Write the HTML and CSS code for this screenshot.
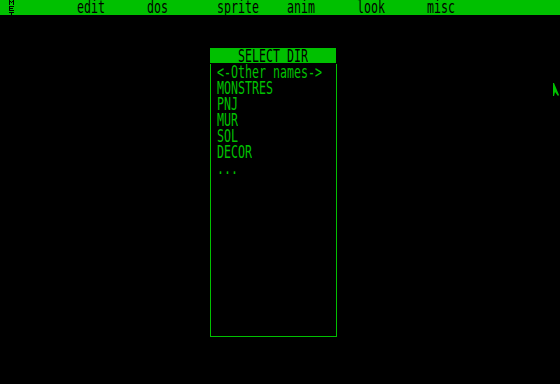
FILE: index.html
```html
<!DOCTYPE html>
<html>
<head>
<meta charset="utf-8">
<link rel="stylesheet" href="styles.css">
</head>
<body>
<div class="screen">
  <div class="menubar">
    <span class="logo"><svg width="5" height="15" viewBox="0 0 5 15"><path d="M0 0h1v1h1v1h1v-1h1v-1h1v5h-1v-3h-1v1h-1v-1h-1v3h-1z M0 6h5v1h-4v1h3v1h-3v1h4v1h-5z M0 12h5v1h-2v2h-1v-2h-2z" fill="#000"/></svg></span>
    <span class="item">edit</span>
    <span class="item">dos</span>
    <span class="item">sprite</span>
    <span class="item">anim</span>
    <span class="item">look</span>
    <span class="item">misc</span>
  </div>
  <div class="window">
    <div class="title"><span class="t">SELECT DIR</span></div>
    <div class="body">
      <div class="line"><span class="t">&lt;-Other names-&gt;</span></div>
      <div class="line"><span class="t">MONSTRES</span></div>
      <div class="line"><span class="t">PNJ</span></div>
      <div class="line"><span class="t">MUR</span></div>
      <div class="line"><span class="t">SOL</span></div>
      <div class="line"><span class="t">DECOR</span></div>
      <div class="line"><span class="t">...</span></div>
    </div>
  </div>
  <svg class="cursor" width="6" height="14" viewBox="0 0 6 14"><path d="M0 0L1 0L6 12L5 13L2 9L1 13L0 13Z" fill="#00c000"/></svg>
</div>
</body>
</html>
```
FILE: styles.css
```css
html, body {
  margin: 0;
  padding: 0;
  background: #000;
}
.screen {
  position: relative;
  width: 560px;
  height: 384px;
  overflow: hidden;
  background: #000;
  font-family: "DejaVu Sans Mono", monospace;
  font-size: 11.63px;
  color: #00c000;
}
.t {
  display: inline-block;
  white-space: pre;
  line-height: 10px;
  vertical-align: middle;
  transform: scaleY(1.55);
}
.menubar {
  height: 15px;
  background: #00c000;
  color: #000;
  display: flex;
  align-items: center;
  padding-left: 9px;
}
.logo {
  width: 68px;
  height: 15px;
  display: flex;
}
.item {
  width: 70px;
  white-space: pre;
  line-height: 10px;
  display: inline-block;
  transform: scaleY(1.45) translateY(-0.6px);
}
.window {
  margin-left: 210px;
  margin-top: 33px;
  width: 127px;
}
.title {
  width: 126px;
  height: 15px;
  background: #00c000;
  color: #000;
  line-height: 15px;
  text-align: center;
}
.body {
  margin-top: 1px;
  height: 272px;
  border: 1px solid #00c000;
  border-top: none;
  padding-left: 6px;
}
.line {
  height: 16px;
  line-height: 15px;
}
.cursor {
  position: absolute;
  left: 553px;
  top: 83px;
}
```
